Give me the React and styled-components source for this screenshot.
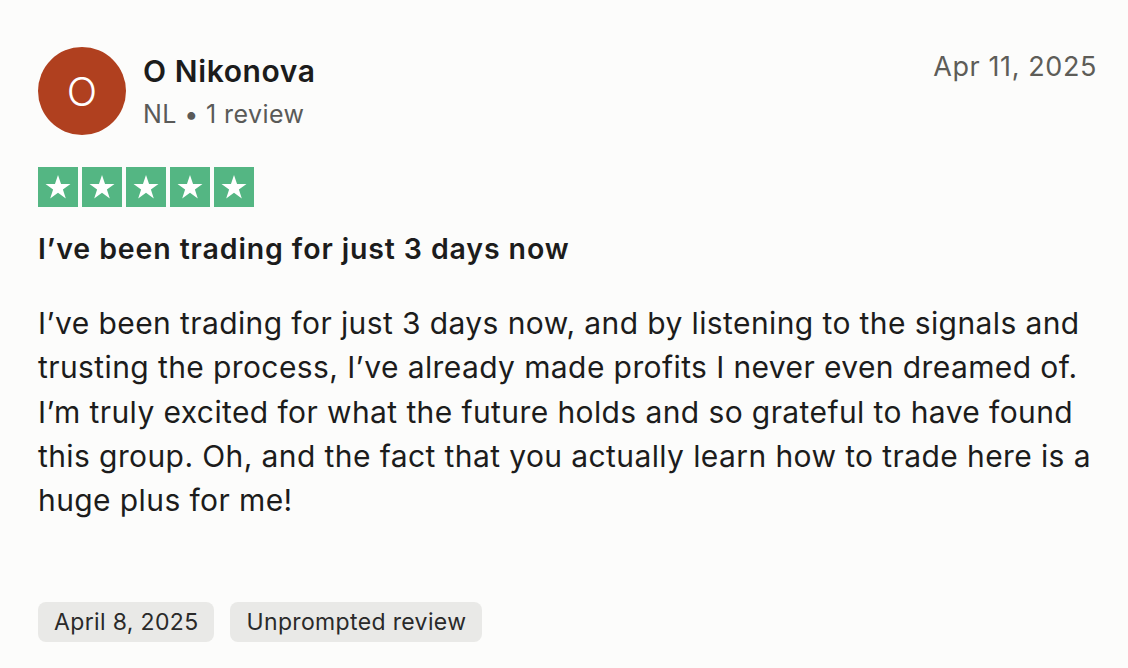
import React from 'react';
import styled, { createGlobalStyle } from 'styled-components';

const GlobalStyle = createGlobalStyle`
  html, body {
    margin: 0;
    padding: 0;
    background: #fcfcfb;
  }
  body {
    font-family: Inter, "Liberation Sans", sans-serif;
    color: #1c1c1c;
  }
`;

const Card = styled.article`
  width: 1128px;
  height: 668px;
  box-sizing: border-box;
  padding: 47px 31px 0 38px;
  display: flex;
  flex-direction: column;
`;

const Header = styled.header`
  display: flex;
  align-items: flex-start;
  justify-content: space-between;
`;

const Consumer = styled.div`
  display: flex;
  align-items: center;
  gap: 17px;
`;

const Avatar = styled.div`
  width: 88px;
  height: 88px;
  border-radius: 50%;
  background: #b0401f;
  color: #fff;
  display: flex;
  align-items: center;
  justify-content: center;
  font-size: 40px;
  font-weight: 300;
`;

const Info = styled.div`
  display: flex;
  flex-direction: column;
  gap: 10px;
`;

const Name = styled.span`
  font-size: 30px;
  font-weight: 600;
  letter-spacing: 0.6px;
`;

const Meta = styled.span`
  font-size: 25px;
  color: #5a5a58;
  letter-spacing: 0.4px;
`;

const PostDate = styled.time`
  font-size: 27px;
  color: #5e5d58;
  margin-top: 3px;
  letter-spacing: 0.6px;
`;

const Stars = styled.div`
  display: flex;
  gap: 4px;
  margin-top: 32px;
`;

const StarBox = styled.div`
  width: 40px;
  height: 40px;
  background: #54b683;
  display: flex;
  align-items: center;
  justify-content: center;
`;

const Title = styled.h2`
  margin: 24px 0 0;
  font-size: 28.5px;
  font-weight: 600;
  letter-spacing: 0.88px;
`;

const Body = styled.p`
  margin: 35px -10px 0 0;
  font-size: 30px;
  line-height: 44.3px;
  letter-spacing: 0.4px;
`;

const Tags = styled.div`
  display: flex;
  gap: 16px;
  margin-top: auto;
  margin-bottom: 26px;
`;

const Tag = styled.span`
  height: 40px;
  padding: 0 16px;
  border-radius: 8px;
  background: #e9e9e7;
  font-size: 23px;
  letter-spacing: 0.35px;
  display: flex;
  align-items: center;
  color: #2a2a2a;
`;

const Star = () => (
  <svg width="28" height="28" viewBox="0 0 24 24">
    <path
      fill="#fff"
      d="M12 1.8l2.6 7.6h8.1l-6.5 4.7 2.5 7.7L12 17l-6.7 4.8 2.5-7.7L1.3 9.4h8.1z"
    />
  </svg>
);

export default function App() {
  return (
    <>
      <GlobalStyle />
      <Card>
        <Header>
          <Consumer>
            <Avatar>O</Avatar>
            <Info>
              <Name>O Nikonova</Name>
              <Meta>NL • 1 review</Meta>
            </Info>
          </Consumer>
          <PostDate>Apr 11, 2025</PostDate>
        </Header>
        <Stars>
          {[0, 1, 2, 3, 4].map(i => (
            <StarBox key={i}>
              <Star />
            </StarBox>
          ))}
        </Stars>
        <Title>I’ve been trading for just 3 days now</Title>
        <Body>
          I’ve been trading for just 3 days now, and by listening to the signals and
          trusting the process, I’ve already made profits I never even dreamed of.
          I’m truly excited for what the future holds and so grateful to have found
          this group. Oh, and the fact that you actually learn how to trade here is a
          huge plus for me!
        </Body>
        <Tags>
          <Tag>April 8, 2025</Tag>
          <Tag>Unprompted review</Tag>
        </Tags>
      </Card>
    </>
  );
}
